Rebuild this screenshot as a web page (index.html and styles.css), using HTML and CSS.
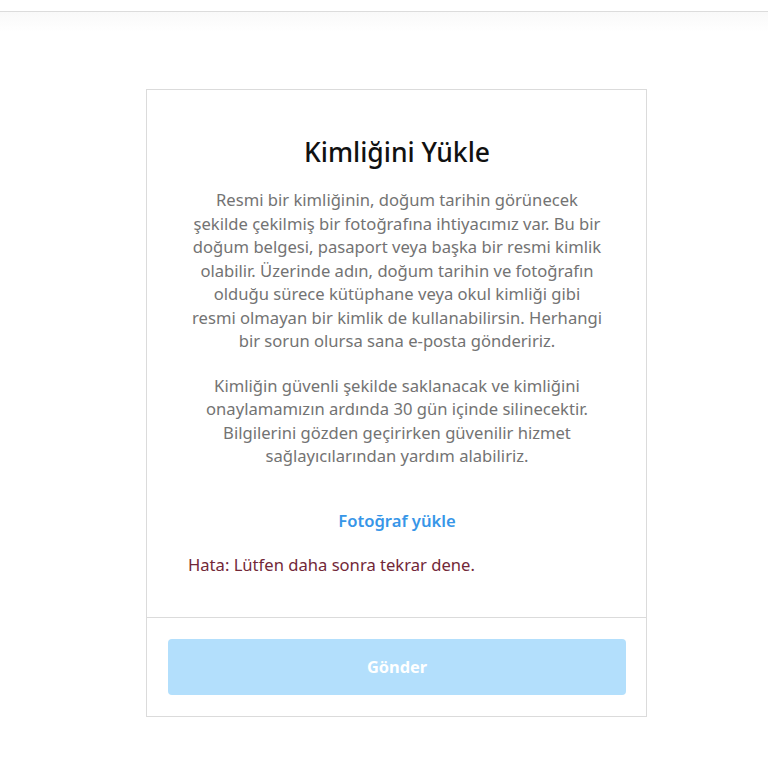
FILE: index.html
```html
<!DOCTYPE html>
<html lang="tr">
<head>
<meta charset="utf-8">
<link rel="stylesheet" href="styles.css">
</head>
<body>
<div class="topbar"></div>
<main class="page">
  <section class="card">
    <div class="card-body">
      <h1 class="title">Kimliğini Yükle</h1>
      <p class="text">Resmi bir kimliğinin, doğum tarihin görünecek<br>şekilde çekilmiş bir fotoğrafına ihtiyacımız var. Bu bir<br>doğum belgesi, pasaport veya başka bir resmi kimlik<br>olabilir. Üzerinde adın, doğum tarihin ve fotoğrafın<br>olduğu sürece kütüphane veya okul kimliği gibi<br>resmi olmayan bir kimlik de kullanabilirsin. Herhangi<br>bir sorun olursa sana e-posta göndeririz.</p>
      <p class="text">Kimliğin güvenli şekilde saklanacak ve kimliğini<br>onaylamamızın ardında 30 gün içinde silinecektir.<br>Bilgilerini gözden geçirirken güvenilir hizmet<br>sağlayıcılarından yardım alabiliriz.</p>
      <a class="upload">Fotoğraf yükle</a>
      <p class="error">Hata: Lütfen daha sonra tekrar dene.</p>
    </div>
    <div class="card-foot">
      <button class="submit" disabled>Gönder</button>
    </div>
  </section>
</main>
</body>
</html>
```
FILE: styles.css
```css
* { box-sizing: border-box; }
html, body { margin: 0; padding: 0; background: #fff; }
body { font-family: "Noto Sans", "Open Sans", sans-serif; }
.topbar {
  height: 12px;
  border-bottom: 1px solid #dcdcdc;
  background: #fff;
}
.page {
  display: flex;
  justify-content: center;
  padding-top: 77px;
  padding-left: 25px;
  background: linear-gradient(#f9f9f9, #fff 20px);
}
.card {
  width: 501px;
  border: 1px solid #dbdbdb;
  background: #fff;
}
.card-body {
  padding: 46px 40px 40px 41px;
  display: flex;
  flex-direction: column;
  align-items: center;
}
.title {
  margin: 0 0 20px;
  font-size: 26.5px;
  font-weight: 500;
  color: #111;
  line-height: 32px;
}
.text {
  margin: 0 0 21px;
  font-size: 16.6px;
  line-height: 23.5px;
  color: #737373;
  text-align: center;
  white-space: nowrap;
}
.upload {
  margin-top: 20px;
  font-size: 16.6px;
  font-weight: 600;
  color: #3796e8;
  line-height: 24px;
}
.error {
  align-self: flex-start;
  margin: 20px 0 0;
  font-size: 16.6px;
  line-height: 24px;
  color: #722838;
}
.card-foot {
  border-top: 1px solid #dbdbdb;
  padding: 21px 20px 21px 21px;
}
.submit {
  width: 100%;
  height: 56px;
  border: 0;
  border-radius: 4px;
  background: #b3dffc;
  color: #fff;
  font-family: inherit;
  font-size: 16.4px;
  font-weight: 700;
}
```
